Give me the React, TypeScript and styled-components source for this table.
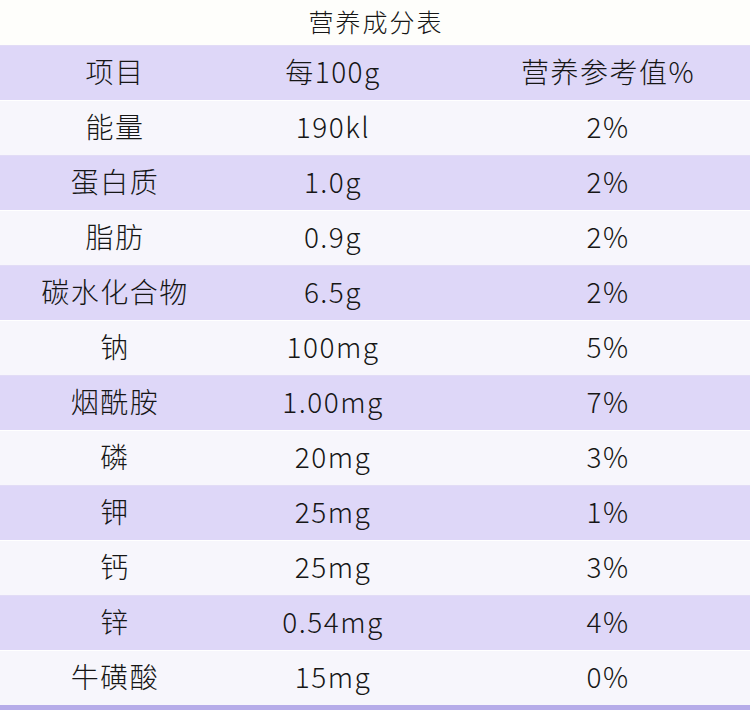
import React from "react";
import styled, { createGlobalStyle } from "styled-components";

const Global = createGlobalStyle`
  html, body { margin: 0; padding: 0; background: #ffffff; }
  body { font-family: "Noto Sans CJK SC", "Noto Sans", sans-serif; color: #161616; }
`;

const Page = styled.div`
  width: 750px;
  display: flex;
  flex-direction: column;
`;

const Title = styled.div`
  height: 45px;
  box-sizing: border-box;
  padding: 0 0 3px 2px;
  display: flex;
  align-items: center;
  justify-content: center;
  font-size: 25px;
  font-weight: 300;
  letter-spacing: 2px;
  background: #fefefb;
`;

const Row = styled.div<{ $tone: "header" | "light" | "dark" }>`
  height: 55px;
  box-sizing: border-box;
  padding-bottom: 4px;
  display: grid;
  grid-template-columns: 230px 206px 1fr;
  align-items: center;
  font-size: 28px;
  font-weight: 300;
  letter-spacing: 1.5px;
  background: ${(p) => (p.$tone === "light" ? "#f7f6fc" : "#ded7f8")};
  border-top: 1px solid ${(p) => (p.$tone === "light" ? "#ffffff" : "#e2dcf6")};
`;

const Cell = styled.div<{ $shift?: number }>`
  text-align: center;
  padding-left: ${(p) => p.$shift ?? 0}px;
  white-space: nowrap;
`;

const BottomBar = styled.div`
  height: 6px;
  background: #b6ace9;
`;

const rows: [string, string, string][] = [
  ["能量", "190kl", "2%"],
  ["蛋白质", "1.0g", "2%"],
  ["脂肪", "0.9g", "2%"],
  ["碳水化合物", "6.5g", "2%"],
  ["钠", "100mg", "5%"],
  ["烟酰胺", "1.00mg", "7%"],
  ["磷", "20mg", "3%"],
  ["钾", "25mg", "1%"],
  ["钙", "25mg", "3%"],
  ["锌", "0.54mg", "4%"],
  ["牛磺酸", "15mg", "0%"],
];

export default function App() {
  return (
    <Page>
      <Global />
      <Title>营养成分表</Title>
      <Row $tone="header">
        <Cell>项目</Cell>
        <Cell>每100g</Cell>
        <Cell $shift={30}>营养参考值%</Cell>
      </Row>
      {rows.map((r, i) => (
        <Row key={r[0]} $tone={i % 2 === 0 ? "light" : "dark"}>
          <Cell>{r[0]}</Cell>
          <Cell>{r[1]}</Cell>
          <Cell $shift={30}>{r[2]}</Cell>
        </Row>
      ))}
      <BottomBar />
    </Page>
  );
}
